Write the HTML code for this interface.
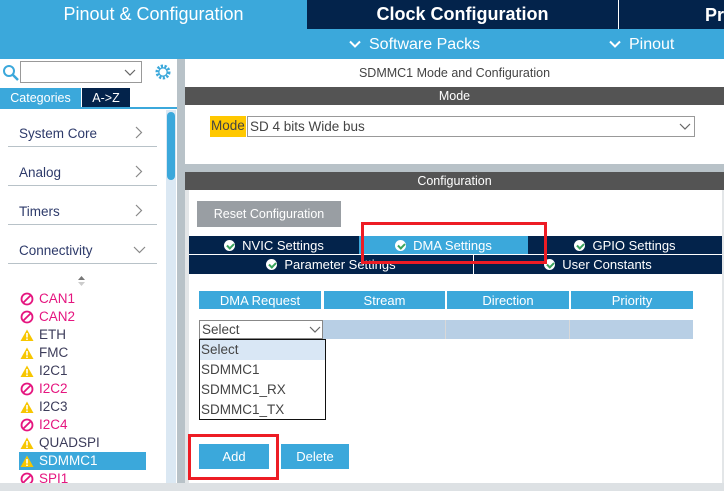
<!DOCTYPE html>
<html><head><style>
*{margin:0;padding:0;box-sizing:border-box}
body{width:724px;height:491px;position:relative;overflow:hidden;background:#fff;font-family:"Liberation Sans",Arial,sans-serif;}
.a{position:absolute}
.t{white-space:nowrap}
.c{display:flex;align-items:center;justify-content:center;color:#fff}
.it{position:absolute;left:20px;font-size:13.5px;color:#3c3c5a;display:flex;align-items:center}
.ico{display:inline-block;width:14px;height:14px;margin-right:5px}
.pink{color:#e5157f}
.chk{display:inline-block;width:11px;height:11px;border-radius:50%;background:#fff;margin-right:7px;position:relative}
.chk:after{content:"";position:absolute;left:3.5px;top:2px;width:3px;height:5px;border:solid #3aa55c;border-width:0 2px 2px 0;transform:rotate(45deg)}
</style></head><body>
<svg width="0" height="0" style="position:absolute"><defs>
<symbol id="no" viewBox="0 0 14 14"><circle cx="7" cy="7" r="5.5" fill="none" stroke="#e5157f" stroke-width="1.8"/><line x1="3.2" y1="10.8" x2="10.8" y2="3.2" stroke="#e5157f" stroke-width="1.8"/></symbol>
<symbol id="wa" viewBox="0 0 14 14"><path d="M7 1.5 L13.5 13 H0.5 Z" fill="#f7c600"/><rect x="6.2" y="5" width="1.6" height="4.5" fill="#fff"/><rect x="6.2" y="10.5" width="1.6" height="1.5" fill="#fff"/></symbol>
</defs></svg>
<div class="a c t" style="left:0;top:0;width:307px;height:29px;background:#3ba8db;font-size:18px">Pinout &amp; Configuration</div>
<div class="a c t" style="left:307px;top:0;width:311px;height:29px;background:#03234b;font-size:18px;font-weight:bold">Clock Configuration</div>
<div class="a" style="left:618px;top:0;width:1px;height:29px;background:#fff"></div>
<div class="a t" style="left:619px;top:0;width:105px;height:29px;background:#03234b;color:#fff;font-size:18px;font-weight:bold;padding:5px 0 0 86px">Pr</div>
<div class="a" style="left:0;top:29px;width:724px;height:30px;background:#3ba8db"></div>
<svg class="a" style="left:349px;top:40px" width="12" height="9"><path d="M1 1.5 L6 6.5 L11 1.5" fill="none" stroke="#fff" stroke-width="2"/></svg>
<div class="a t" style="left:369px;top:36px;color:#fff;font-size:16px">Software Packs</div>
<svg class="a" style="left:609px;top:40px" width="12" height="9"><path d="M1 1.5 L6 6.5 L11 1.5" fill="none" stroke="#fff" stroke-width="2"/></svg>
<div class="a t" style="left:629px;top:36px;color:#fff;font-size:16px">Pinout</div>
<svg class="a" style="left:2px;top:64px" width="18" height="18"><circle cx="7" cy="7" r="5" fill="none" stroke="#3ba8db" stroke-width="2"/><line x1="11" y1="11" x2="16" y2="16" stroke="#3ba8db" stroke-width="2.5"/></svg>
<div class="a" style="left:20px;top:61px;width:122px;height:22px;border:1px solid #999;background:#fff"></div>
<svg class="a" style="left:124px;top:69px" width="12" height="8"><path d="M1 1 L6 6 L11 1" fill="none" stroke="#666" stroke-width="1.2"/></svg>
<svg class="a" style="left:154px;top:63px" width="18" height="18"><circle cx="9" cy="9" r="6" fill="none" stroke="#3ba8db" stroke-width="3" stroke-dasharray="2.2 1.5"/><circle cx="9" cy="9" r="4.2" fill="none" stroke="#3ba8db" stroke-width="1.3"/></svg>
<div class="a c t" style="left:0;top:88px;width:81px;height:19px;background:#3ba8db;font-size:12.5px;color:#fff">Categories</div>
<div class="a c t" style="left:82px;top:88px;width:48px;height:19px;background:#03234b;font-size:12.5px">A-&gt;Z</div>
<div class="a" style="left:0;top:107px;width:177px;height:2px;background:#3ba8db"></div>
<div class="a" style="left:166px;top:110px;width:10px;height:373px;background:#dbe8f3"></div>
<div class="a" style="left:167px;top:112px;width:8px;height:68px;background:#3ba8db;border-radius:4px"></div>
<div class="a" style="left:177px;top:59px;width:8px;height:432px;background:#b8c2c8"></div>
<div class="a t" style="left:19px;top:126px;font-size:13.5px;color:#2d3a6a">System Core</div>
<div class="a t" style="left:19px;top:165px;font-size:13.5px;color:#2d3a6a">Analog</div>
<div class="a t" style="left:19px;top:204px;font-size:13.5px;color:#2d3a6a">Timers</div>
<div class="a t" style="left:19px;top:243px;font-size:13.5px;color:#2d3a6a">Connectivity</div>
<svg class="a" style="left:135px;top:126px" width="8" height="13"><path d="M1 1 L6.5 6.5 L1 12" fill="none" stroke="#888" stroke-width="1.2"/></svg>
<svg class="a" style="left:135px;top:165px" width="8" height="13"><path d="M1 1 L6.5 6.5 L1 12" fill="none" stroke="#888" stroke-width="1.2"/></svg>
<svg class="a" style="left:135px;top:204px" width="8" height="13"><path d="M1 1 L6.5 6.5 L1 12" fill="none" stroke="#888" stroke-width="1.2"/></svg>
<svg class="a" style="left:133px;top:246px" width="13" height="8"><path d="M1 1 L6.5 6.5 L12 1" fill="none" stroke="#888" stroke-width="1.2"/></svg>
<div class="a" style="left:8px;top:146px;width:149px;height:1px;background:#b8c2c8"></div>
<div class="a" style="left:8px;top:185px;width:149px;height:1px;background:#b8c2c8"></div>
<div class="a" style="left:8px;top:224px;width:149px;height:1px;background:#b8c2c8"></div>
<div class="a" style="left:8px;top:263px;width:149px;height:1px;background:#b8c2c8"></div>
<svg class="a" style="left:77px;top:275px" width="9" height="12"><path d="M4.5 1 L8 5 H1 Z" fill="#777"/><path d="M4.5 11 L8 7 H1 Z" fill="#ccc"/></svg>
<div class="a" style="left:19px;top:452px;width:127px;height:18px;background:#3ba8db"></div>
<div class="it t pink" style="top:291px"><svg class="ico"><use href="#no"/></svg>CAN1</div>
<div class="it t pink" style="top:309px"><svg class="ico"><use href="#no"/></svg>CAN2</div>
<div class="it t" style="top:327px"><svg class="ico"><use href="#wa"/></svg>ETH</div>
<div class="it t" style="top:345px"><svg class="ico"><use href="#wa"/></svg>FMC</div>
<div class="it t" style="top:363px"><svg class="ico"><use href="#wa"/></svg>I2C1</div>
<div class="it t pink" style="top:381px"><svg class="ico"><use href="#no"/></svg>I2C2</div>
<div class="it t" style="top:399px"><svg class="ico"><use href="#wa"/></svg>I2C3</div>
<div class="it t pink" style="top:417px"><svg class="ico"><use href="#no"/></svg>I2C4</div>
<div class="it t" style="top:435px"><svg class="ico"><use href="#wa"/></svg>QUADSPI</div>
<div class="it t" style="top:453px;color:#fff"><svg class="ico"><use href="#wa"/></svg>SDMMC1</div>
<div class="it t pink" style="top:471px"><svg class="ico"><use href="#no"/></svg>SPI1</div>
<div class="a" style="left:0;top:483px;width:724px;height:8px;background:#dde1e4"></div>
<div class="a t" style="left:185px;top:66px;width:539px;text-align:center;font-size:12.5px;color:#444">SDMMC1 Mode and Configuration</div>
<div class="a c t" style="left:185px;top:87px;width:539px;height:18px;background:#545454;font-size:12.5px">Mode</div>
<div class="a t" style="left:210px;top:116px;width:36px;height:21px;background:#ffc800;font-size:13.5px;color:#444;padding:2px 0 0 1px">Mode</div>
<div class="a t" style="left:247px;top:116px;width:448px;height:21px;border:1px solid #999;font-size:13.5px;color:#444;padding:2px 0 0 2px">SD 4 bits Wide bus</div>
<svg class="a" style="left:679px;top:123px" width="12" height="8"><path d="M1 1 L6 6 L11 1" fill="none" stroke="#666" stroke-width="1.2"/></svg>
<div class="a" style="left:185px;top:164px;width:539px;height:8px;background:#b8c2c8"></div>
<div class="a c t" style="left:185px;top:172px;width:539px;height:18px;background:#545454;font-size:12.5px">Configuration</div>
<div class="a" style="left:185px;top:190px;width:4px;height:293px;background:#e3e6e8"></div>
<div class="a c t" style="left:197px;top:201px;width:144px;height:26px;background:#999ea3;font-size:12.5px">Reset Configuration</div>
<div class="a" style="left:189px;top:236px;width:533px;height:38px;background:#03234b"></div>
<div class="a" style="left:189px;top:254px;width:533px;height:1px;background:#fff"></div>
<div class="a" style="left:473px;top:255px;width:1px;height:19px;background:#fff"></div>
<div class="a" style="left:359px;top:236px;width:169px;height:18px;background:#3ba8db"></div>
<div class="a c t" style="left:189px;top:236px;width:170px;height:18px;font-size:13px"><span class="chk"></span>NVIC Settings</div>
<div class="a c t" style="left:359px;top:236px;width:169px;height:18px;font-size:13px"><span class="chk"></span>DMA Settings</div>
<div class="a c t" style="left:528px;top:236px;width:194px;height:18px;font-size:13px"><span class="chk"></span>GPIO Settings</div>
<div class="a c t" style="left:189px;top:255px;width:284px;height:19px;font-size:13px"><span class="chk"></span>Parameter Settings</div>
<div class="a c t" style="left:474px;top:255px;width:248px;height:19px;font-size:13px"><span class="chk"></span>User Constants</div>
<div class="a" style="left:722px;top:190px;width:2px;height:293px;background:#e3e6e8"></div>
<div class="a c t" style="left:199px;top:291px;width:122px;height:18px;background:#3ba8db;font-size:13px">DMA Request</div>
<div class="a c t" style="left:324px;top:291px;width:121px;height:18px;background:#3ba8db;font-size:13px">Stream</div>
<div class="a c t" style="left:447px;top:291px;width:122px;height:18px;background:#3ba8db;font-size:13px">Direction</div>
<div class="a c t" style="left:571px;top:291px;width:122px;height:18px;background:#3ba8db;font-size:13px">Priority</div>
<div class="a" style="left:322px;top:320px;width:371px;height:19px;background:#b8cfe5"></div>
<div class="a" style="left:445px;top:320px;width:1px;height:19px;background:#d8d8d8"></div>
<div class="a" style="left:569px;top:320px;width:1px;height:19px;background:#d8d8d8"></div>
<div class="a t" style="left:199px;top:320px;width:124px;height:19px;border:1px solid #888;background:#fff;font-size:13.5px;color:#444;padding:1px 0 0 2px">Select</div>
<svg class="a" style="left:309px;top:326px" width="12" height="8"><path d="M1 1 L6 6 L11 1" fill="none" stroke="#666" stroke-width="1.2"/></svg>
<div class="a" style="left:199px;top:339px;width:127px;height:81px;border:1px solid #111;background:#fff;font-size:13.5px;color:#444">
<div style="background:#d9e7f5;height:20px;padding:2px 0 0 1px">Select</div>
<div style="height:20px;padding:2px 0 0 1px">SDMMC1</div>
<div style="height:20px;padding:2px 0 0 1px">SDMMC1_RX</div>
<div style="height:19px;padding:2px 0 0 1px">SDMMC1_TX</div>
</div>
<div class="a c t" style="left:199px;top:444px;width:70px;height:25px;background:#3ba8db;font-size:13px">Add</div>
<div class="a c t" style="left:281px;top:444px;width:68px;height:25px;background:#3ba8db;font-size:13px">Delete</div>
<div class="a" style="left:188px;top:434px;width:91px;height:46px;border:3px solid #ed1c24"></div>
<div class="a" style="left:361px;top:222px;width:186px;height:42px;border:3px solid #ed1c24"></div>
</body></html>
